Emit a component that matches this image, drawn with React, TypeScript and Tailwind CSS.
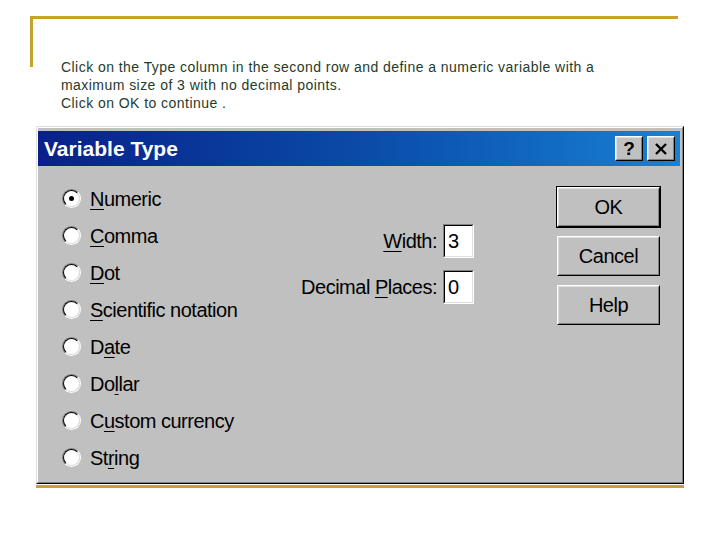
import type { ReactNode } from "react";

const FONT = { fontFamily: '"Liberation Sans", Arial, sans-serif' };

const TYPES: { label: string; key: number; checked?: boolean }[] = [
  { label: "Numeric", key: 0, checked: true },
  { label: "Comma", key: 0 },
  { label: "Dot", key: 0 },
  { label: "Scientific notation", key: 0 },
  { label: "Date", key: 1 },
  { label: "Dollar", key: 2 },
  { label: "Custom currency", key: 1 },
  { label: "String", key: 2 },
];

function Mnemonic({ text, at }: { text: string; at: number }) {
  return (
    <>
      {text.slice(0, at)}
      <span className="underline decoration-1 underline-offset-[3px]">{text[at]}</span>
      {text.slice(at + 1)}
    </>
  );
}

function Radio({ checked }: { checked?: boolean }) {
  return (
    <div className="w-[19px] h-[19px] rounded-full border border-t-[#808080] border-l-[#808080] border-r-white border-b-white shrink-0">
      <div className="w-full h-full rounded-full border border-t-black border-l-black border-r-[#dfdfdf] border-b-[#dfdfdf] bg-white flex items-center justify-center">
        {checked && <div className="w-[5px] h-[5px] rounded-full bg-black" />}
      </div>
    </div>
  );
}

function Field({ value }: { value: string }) {
  return (
    <div className="w-[31px] h-[34px] border border-t-[#808080] border-l-[#808080] border-r-white border-b-white">
      <div className="w-full h-full border border-t-black border-l-black border-r-[#dfdfdf] border-b-[#dfdfdf] bg-white pl-[3px] text-[20px] leading-[30px] tracking-[-0.5px] text-black">
        {value}
      </div>
    </div>
  );
}

function Button({ children, primary }: { children: ReactNode; primary?: boolean }) {
  return (
    <div className={primary ? "border border-black" : "border border-transparent"}>
      <div className="w-[103px] h-[40px] border border-t-white border-l-white border-r-black border-b-black">
        <div className="w-full h-full border border-t-[#dfdfdf] border-l-[#dfdfdf] border-r-[#808080] border-b-[#808080] flex items-center justify-center text-[20px] tracking-[-0.5px] text-black">
          {children}
        </div>
      </div>
    </div>
  );
}

function CaptionButton({ children }: { children: ReactNode }) {
  return (
    <div className="w-[28px] h-[25px] bg-[#c0c0c0] border border-t-white border-l-white border-r-black border-b-black">
      <div className="w-full h-full border border-t-[#dfdfdf] border-l-[#dfdfdf] border-r-[#808080] border-b-[#808080] flex items-center justify-center">
        {children}
      </div>
    </div>
  );
}

export default function App() {
  return (
    <div className="w-[720px] h-[540px] bg-white overflow-hidden" style={FONT}>
      {/* Slide header rule */}
      <div className="pt-[16px] pl-[30px]">
        <div className="h-[3px] w-[648px] bg-[#c9a22c]" />
        <div className="flex">
          <div className="w-[3px] h-[48px] bg-[#c9a22c] shrink-0" />
          <div className="pl-[28px] pt-[39px] text-[14px] leading-[18px] tracking-[0.45px] text-[#1f3b2c]">
            <p>Click on the Type column in the second row and define a numeric variable with a</p>
            <p>maximum size of 3 with no decimal points.</p>
            <p>Click on OK to continue .</p>
          </div>
        </div>
      </div>

      {/* Variable Type dialog */}
      <div className="ml-[36px] mt-[14px] w-[648px] h-[358px] border border-t-[#dfdfdf] border-l-[#dfdfdf] border-r-black border-b-black">
        <div className="w-full h-full border border-t-white border-l-white border-r-[#808080] border-b-[#808080] bg-[#c0c0c0] flex flex-col pr-[2px] pb-[2px] pt-[3px]">
          <div className="h-[35px] flex items-center pl-[6px] pr-[5px] bg-gradient-to-r from-[#0a1f8a] via-[#0b4aa8] to-[#1a80d2]">
            <span className="text-white font-bold text-[21px]">Variable Type</span>
            <div className="ml-auto flex gap-[4px]">
              <CaptionButton>
                <span className="font-bold text-[19px] leading-none text-black">?</span>
              </CaptionButton>
              <CaptionButton>
                <svg width="14" height="12" viewBox="0 0 14 12">
                  <path d="M2 1 L12 11 M12 1 L2 11" stroke="black" strokeWidth="2.4" />
                </svg>
              </CaptionButton>
            </div>
          </div>

          <div className="flex-1 flex text-black text-[20px] tracking-[-0.5px]">
            <div className="w-[256px] pl-[24px] pt-[14px] flex flex-col">
              {TYPES.map((t) => (
                <div key={t.label} className="h-[37px] flex items-center gap-[9px]">
                  <Radio checked={t.checked} />
                  <span>
                    <Mnemonic text={t.label} at={t.key} />
                  </span>
                </div>
              ))}
            </div>

            <div className="w-[180px] pt-[58px] flex flex-col gap-[12px]">
              <div className="flex items-center justify-end gap-[6px]">
                <span>
                  <Mnemonic text="Width:" at={0} />
                </span>
                <Field value="3" />
              </div>
              <div className="flex items-center justify-end gap-[6px]">
                <span>
                  <Mnemonic text="Decimal Places:" at={8} />
                </span>
                <Field value="0" />
              </div>
            </div>

            <div className="ml-auto mr-[19px] pt-[20px] flex flex-col gap-[7px]">
              <Button primary>OK</Button>
              <Button>Cancel</Button>
              <Button>Help</Button>
            </div>
          </div>
        </div>
      </div>
      <div className="ml-[36px] mt-[1px] h-[3px] w-[648px] bg-[#c9a22c]" />
    </div>
  );
}
